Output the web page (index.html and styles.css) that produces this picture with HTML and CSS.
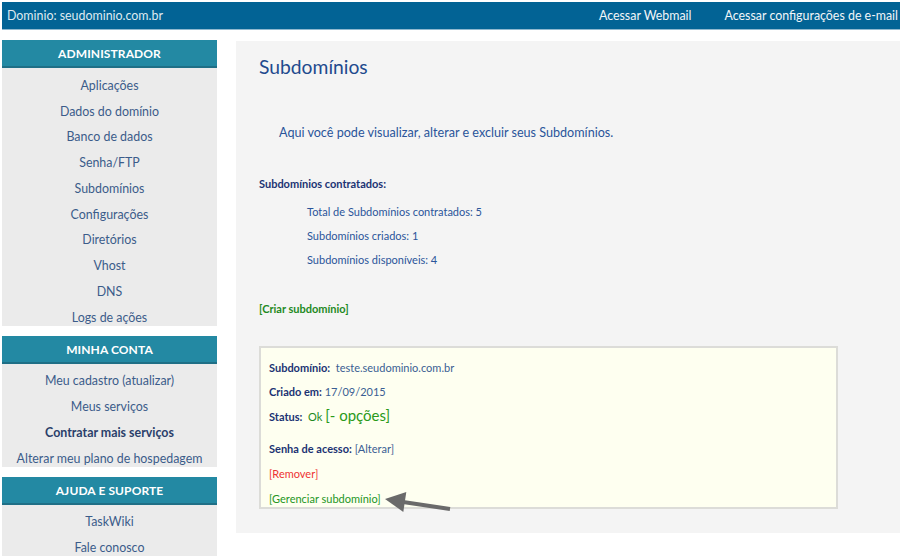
FILE: index.html
```html
<!DOCTYPE html>
<html lang="pt-BR">
<head>
<meta charset="utf-8">
<title>Subdomínios</title>
<link rel="stylesheet" href="styles.css">
</head>
<body>
<header class="topbar">
  <div class="domain">Dominio: seudominio.com.br</div>
  <nav class="toplinks">
    <a href="#">Acessar Webmail</a>
    <a href="#">Acessar configurações de e-mail</a>
  </nav>
</header>
<div class="layout">
  <aside class="sidebar">
    <section class="menu">
      <h2 class="menu-head">ADMINISTRADOR</h2>
      <ul class="menu-list">
        <li><a href="#">Aplicações</a></li>
        <li><a href="#">Dados do domínio</a></li>
        <li><a href="#">Banco de dados</a></li>
        <li><a href="#">Senha/FTP</a></li>
        <li><a href="#">Subdomínios</a></li>
        <li><a href="#">Configurações</a></li>
        <li><a href="#">Diretórios</a></li>
        <li><a href="#">Vhost</a></li>
        <li><a href="#">DNS</a></li>
        <li><a href="#">Logs de ações</a></li>
      </ul>
    </section>
    <section class="menu">
      <h2 class="menu-head">MINHA CONTA</h2>
      <ul class="menu-list">
        <li><a href="#">Meu cadastro (atualizar)</a></li>
        <li><a href="#">Meus serviços</a></li>
        <li><a href="#" class="strong">Contratar mais serviços</a></li>
        <li><a href="#">Alterar meu plano de hospedagem</a></li>
      </ul>
    </section>
    <section class="menu">
      <h2 class="menu-head">AJUDA E SUPORTE</h2>
      <ul class="menu-list">
        <li><a href="#">TaskWiki</a></li>
        <li><a href="#">Fale conosco</a></li>
      </ul>
    </section>
  </aside>
  <main class="content">
    <h1 class="title">Subdomínios</h1>
    <p class="intro">Aqui você pode visualizar, alterar e excluir seus Subdomínios.</p>
    <h3 class="sub-head">Subdomínios contratados:</h3>
    <ul class="stats">
      <li>Total de Subdomínios contratados: 5</li>
      <li>Subdomínios criados: 1</li>
      <li>Subdomínios disponíveis: 4</li>
    </ul>
    <a href="#" class="create">[Criar subdomínio]</a>
    <div class="card">
      <div class="row r1"><b>Subdomínio:</b>&nbsp; teste.seudominio.com.br</div>
      <div class="row r2"><b>Criado em:</b> 17/09/2015</div>
      <div class="row r3"><b>Status:</b>&nbsp; <span class="ok">Ok</span> <a href="#" class="opts">[- opções]</a></div>
      <div class="row r4"><b>Senha de acesso:</b> <a href="#" class="blue">[Alterar]</a></div>
      <div class="row r5"><a href="#" class="red">[Remover]</a></div>
      <div class="row r6"><a href="#" class="green">[Gerenciar subdomínio]</a></div>
      <svg class="arrow" width="80" height="32" viewBox="0 0 80 32">
        <line x1="24" y1="16" x2="71" y2="23" stroke="#6a6a6a" stroke-width="4" stroke-linecap="butt"/>
        <polygon points="6,13 27.3,6.1 24.3,25.9" fill="#6a6a6a"/>
      </svg>
    </div>
  </main>
</div>
</body>
</html>
```
FILE: styles.css
```css
* { box-sizing: border-box; }
html, body {
  margin: 0;
  padding: 0;
  background: #ffffff;
  font-family: Lato, "Open Sans", sans-serif;
  overflow: hidden;
}
a { text-decoration: none; }

.topbar {
  margin: 2px 0 0 2px;
  height: 28px;
  background: #026395;
  border-bottom: 1px solid #8fb8cf;
  display: flex;
  align-items: center;
  justify-content: space-between;
  color: #e4eef4;
  font-size: 12.4px;
  padding: 0 2px 0 5px;
}
.domain { color: #dfeaf1; }
.toplinks { display: flex; gap: 33px; }
.toplinks a { color: #f2f6f9; }

.layout {
  display: flex;
  margin-top: 10px;
  gap: 19px;
}
.sidebar {
  width: 215px;
  margin-left: 2px;
  flex: none;
  display: flex;
  flex-direction: column;
  gap: 10px;
}
.menu-head {
  margin: 0;
  height: 28px;
  line-height: 28px;
  background: #2389a3;
  border-bottom: 2px solid #1f6f86;
  color: #ffffff;
  font-size: 12px;
  font-weight: 700;
  text-align: center;
  letter-spacing: 0.1px;
}
.menu-list {
  list-style: none;
  margin: 0;
  padding: 0;
  background: #ebebeb;
}
.menu-list li {
  padding-top: 8.75px;
  line-height: 17px;
  text-align: center;
  font-size: 12.4px;
}
.menu-list a { color: #3b5c8a; }
.menu-list a.strong { color: #2a3f6a; font-weight: 700; }

.content {
  flex: 1;
  background: #f4f4f4;
  margin-top: 1px;
  height: 492px;
  padding: 14px 0 0 23px;
  color: #2b559a;
}
.title {
  margin: 0;
  font-size: 19.3px;
  font-weight: 400;
  line-height: 24px;
  color: #1f4a8e;
}
.intro {
  margin: 46px 0 0 20px;
  font-size: 12.6px;
  line-height: 16px;
  color: #2a549a;
}
.sub-head {
  margin: 36px 0 0 0;
  font-size: 11px;
  font-weight: 700;
  line-height: 14px;
  color: #1b3373;
}
.stats {
  list-style: none;
  margin: 14px 0 0 48px;
  padding: 0;
  font-size: 11px;
  line-height: 14px;
  color: #2b559a;
}
.stats li + li { margin-top: 10px; }
.create {
  display: block;
  margin-top: 35px;
  font-size: 11px;
  font-weight: 700;
  line-height: 14px;
  color: #1e8a1e;
}
.card {
  position: relative;
  margin-top: 30px;
  width: 579px;
  height: 163px;
  background: #fefff0;
  border: 2px solid #dcdcd8;
  padding: 13px 0 0 8px;
  font-size: 11px;
  line-height: 14px;
  color: #3a5e93;
}
.card b { color: #1b3373; font-weight: 700; }
.row { white-space: nowrap; }
.r2 { margin-top: 10px; }
.r3 { margin-top: 9px; }
.r4 { margin-top: 18px; }
.r5 { margin-top: 11px; }
.r6 { margin-top: 11px; }
.ok { color: #1e8a1e; }
.opts { color: #2a9a1a; font-size: 15px; }
.blue { color: #3a5e93; }
.red { color: #ee3333; }
.green { color: #249624; }
.arrow {
  position: absolute;
  left: 118px;
  top: 138px;
}
```
